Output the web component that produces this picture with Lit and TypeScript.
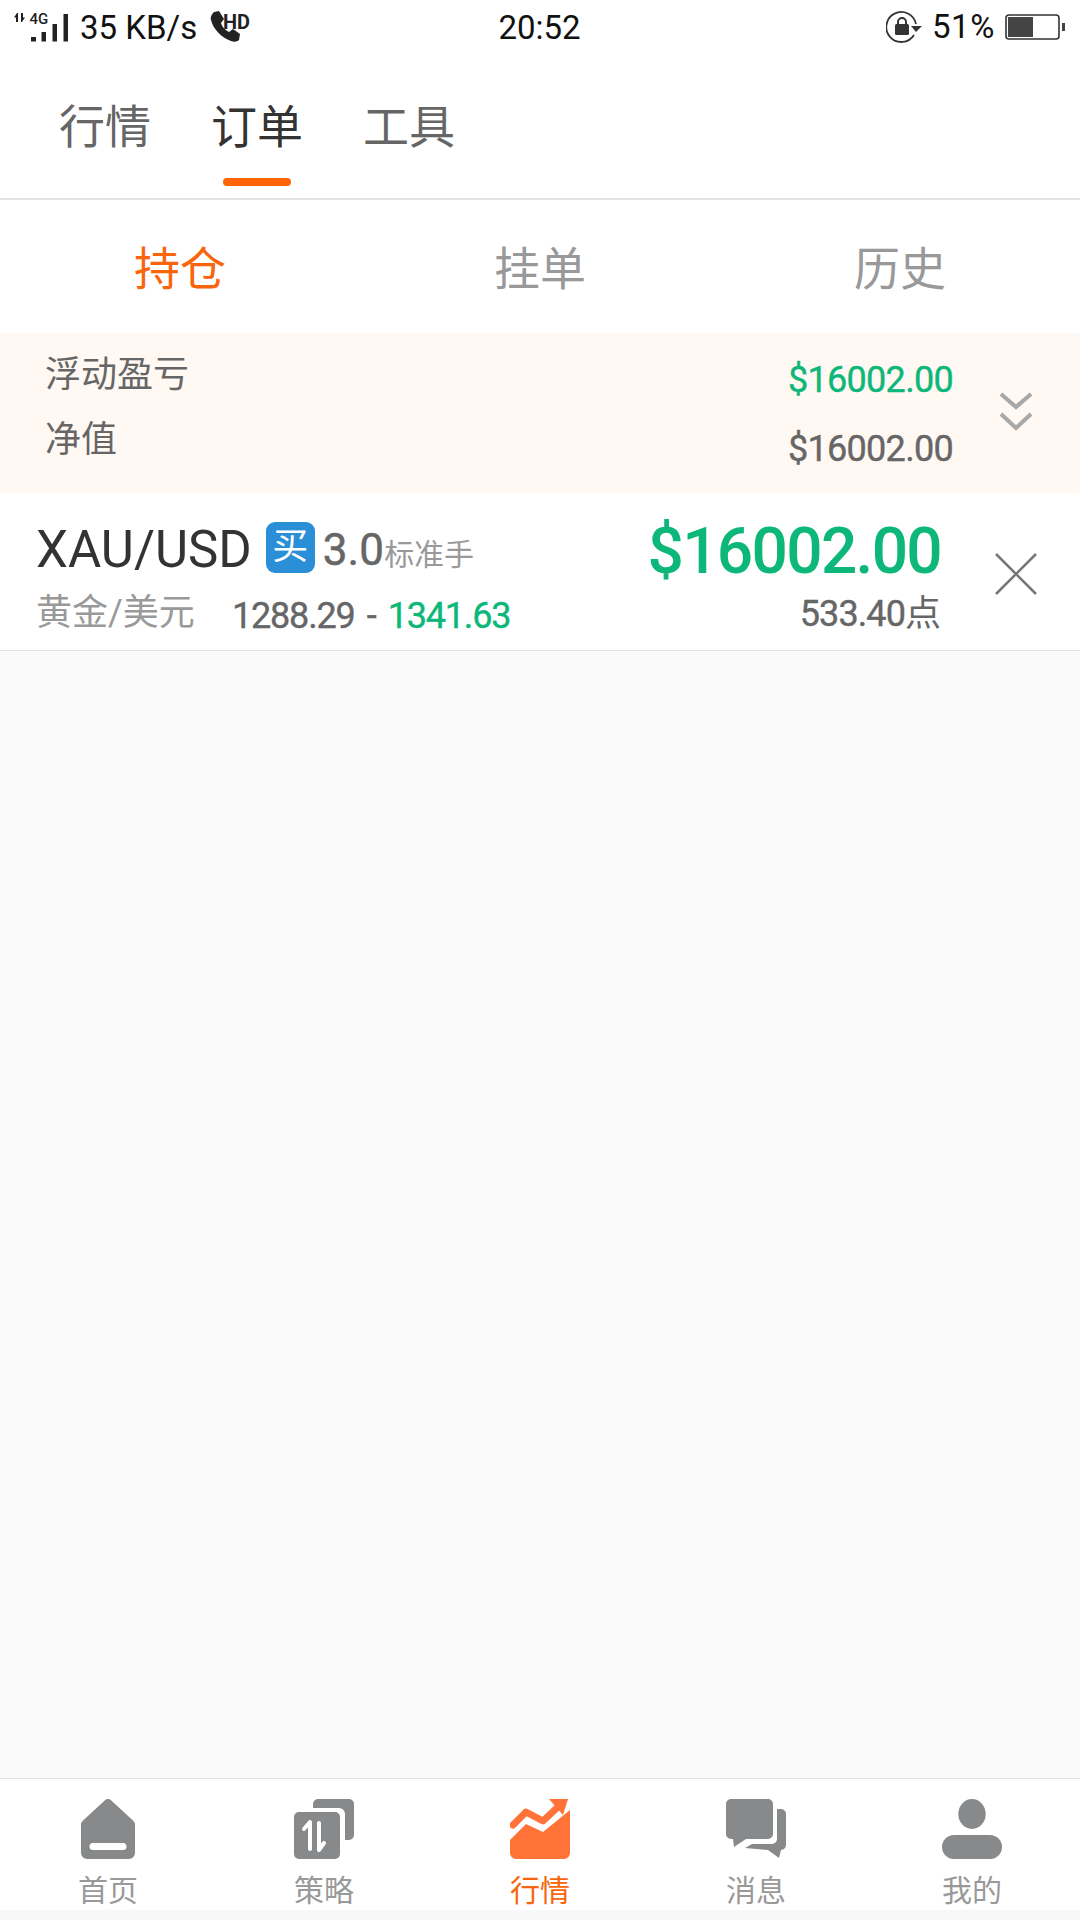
import { LitElement, html, css, svg } from "lit";
import { customElement } from "lit/decorators.js";

const NAV_GRAY = "#88898b";
const icons = {
  home: svg`<path fill="${NAV_GRAY}" fill-rule="evenodd" d="M27 1.2a4.4 4.4 0 0 1 6 0L55 21.5a6 6 0 0 1 2 4.500V54a6 6 0 0 1-6 6H9a6 6 0 0 1-6-6V26a6 6 0 0 1 2-4.500ZM15 44a3.500 3.500 0 0 0 0 7h30a3.500 3.500 0 0 0 0-7Z"/>`,
  strategy: svg`<path fill="${NAV_GRAY}" d="M19 5a5 5 0 0 1 5-5h31a5 5 0 0 1 5 5v31a5 5 0 0 1-5 5h-4V15a6 6 0 0 0-6-6H19Z"/>
    <rect fill="${NAV_GRAY}" x="0" y="13" width="46" height="47" rx="5"/>
    <path fill="none" stroke="#fff" stroke-width="4" stroke-linecap="round" stroke-linejoin="round" d="M10 30l6-7v27M30 44l-5 7V24"/>`,
  market: svg`<path fill="#ff7238" d="M0 41 16 25 33 33 60 11V54a6 6 0 0 1-6 6H6a6 6 0 0 1-6-6Z"/>
    <path fill="none" stroke="#ff7238" stroke-width="7" stroke-linecap="round" stroke-linejoin="round" d="M3 26 16 13 33 22 50 6"/>
    <path fill="#ff7238" d="M39 0H58L53 16Z"/>`,
  message: svg`<path fill="${NAV_GRAY}" d="M5 0H42a5 5 0 0 1 5 5V35a5 5 0 0 1-5 5H20L8 48 7 40H5a5 5 0 0 1-5-5V5a5 5 0 0 1 5-5Z"/>
    <path fill="${NAV_GRAY}" d="M51 10h4a5 5 0 0 1 5 5V46a5 5 0 0 1-5 5L53 59 42 51 19 49 26 45H46a5 5 0 0 0 5-5Z"/>`,
  mine: svg`<ellipse fill="${NAV_GRAY}" cx="30" cy="15" rx="13.700" ry="15"/><rect fill="${NAV_GRAY}" x="0" y="36" width="60" height="24" rx="12"/>`,
};

const navItems = [
  { icon: icons.home, label: "首页" },
  { icon: icons.strategy, label: "策略" },
  { icon: icons.market, label: "行情", active: true },
  { icon: icons.message, label: "消息" },
  { icon: icons.mine, label: "我的" },
];

@customElement("app-root")
export class AppRoot extends LitElement {
  static styles = css`
    :host {
      display: flex;
      flex-direction: column;
      width: 1080px;
      height: 1920px;
      background: #fff;
      font-family: Roboto, "Noto Sans CJK SC", sans-serif;
      overflow: hidden;
    }
    .status {
      height: 50px;
      display: grid;
      grid-template-columns: 1fr auto 1fr;
      align-items: center;
      color: #111;
      font-size: 33px;
      line-height: 38px;
      box-sizing: border-box;
      padding: 6px 15px 0 14px;
    }
    .st-left {
      display: flex;
      align-items: center;
    }
    .st-right {
      display: flex;
      align-items: center;
      justify-content: flex-end;
    }
    .speed {
      margin-left: 10px;
      margin-right: 13px;
    }
    .pct {
      margin: -3px 10px 0 10px;
      letter-spacing: 0.6px;
    }
    .sig,
    .call,
    .lock,
    .batt {
      display: block;
      flex: none;
      margin-top: -3px;
    }
    .sig text {
      font-family: Roboto, sans-serif;
      font-weight: 500;
    }
    .call text {
      font-family: Roboto, sans-serif;
      font-weight: 700;
    }
    .header {
      height: 148px;
      border-bottom: 2px solid #e2e2e2;
      display: flex;
      gap: 60px;
      padding-left: 59px;
    }
    .tab {
      display: flex;
      flex-direction: column;
      align-items: center;
      padding-top: 47px;
      font-size: 46px;
      line-height: 60px;
      color: #666;
    }
    .tab.on {
      color: #333;
    }
    .bar {
      width: 68px;
      height: 8px;
      margin-top: 21px;
      border-radius: 4px;
      background: #ff6406;
    }
    .subtabs {
      height: 133px;
      display: grid;
      grid-template-columns: repeat(3, 1fr);
      align-items: center;
      justify-items: center;
      font-size: 46px;
      line-height: 60px;
      color: #999;
    }
    .subtabs div {
      margin-top: 4px;
    }
    .subtabs .on {
      color: #f9650c;
    }
    .summary {
      height: 160px;
      background: #fff8f3;
      display: flex;
      align-items: flex-start;
      padding: 0 47px 0 45px;
    }
    .sum-labels {
      flex: 1;
      padding-top: 10px;
      font-size: 36px;
      line-height: 65px;
      color: #666;
    }
    .sum-values {
      padding-top: 13px;
      font-size: 36px;
      line-height: 69px;
      color: #666;
      letter-spacing: -0.7px;
      text-align: right;
      -webkit-text-stroke: 0.4px currentColor;
    }
    .green {
      color: #0db77a;
    }
    .chev {
      display: block;
      margin: 59px 0 0 46px;
    }
    .row {
      height: 157px;
      background: #fff;
      border-bottom: 1px solid #e2e2e2;
      display: flex;
      align-items: flex-start;
      padding: 0 43px 0 36px;
    }
    .row-main {
      flex: 1;
      padding-top: 27px;
    }
    .l1 {
      display: flex;
      align-items: center;
      height: 60px;
    }
    .sym {
      font-size: 51px;
      line-height: 60px;
      color: #333;
    }
    .badge {
      width: 49px;
      height: 51px;
      margin: -6px 8px 0 14px;
      border-radius: 9px;
      background: #2a8fd6;
      color: #fff;
      font-size: 36px;
      line-height: 50px;
      text-align: center;
    }
    .lots {
      font-size: 44px;
      color: #666;
      -webkit-text-stroke: 0.5px currentColor;
      letter-spacing: 0.1px;
    }
    .lots span {
      font-size: 30px;
      color: #999;
      -webkit-text-stroke: 0;
      letter-spacing: 0;
    }
    .l2 {
      display: flex;
      align-items: center;
      height: 65px;
      margin-top: 3px;
    }
    .name {
      font-size: 36px;
      line-height: 44px;
      color: #999;
      width: 196px;
      margin-top: -5px;
    }
    .range {
      font-size: 36px;
      line-height: 44px;
      color: #666;
      letter-spacing: -1.2px;
      word-spacing: 4.5px;
      -webkit-text-stroke: 0.4px currentColor;
    }
    .row-right {
      padding-top: 27px;
      text-align: right;
    }
    .pnl {
      font-size: 64px;
      font-weight: 500;
      line-height: 64px;
      letter-spacing: -1.7px;
      color: #0db77a;
    }
    .pts {
      font-size: 36px;
      line-height: 60px;
      letter-spacing: -0.9px;
      color: #666;
      -webkit-text-stroke: 0.4px currentColor;
    }
    .pts span {
      -webkit-text-stroke: 0;
      letter-spacing: 0;
    }
    .close {
      display: block;
      margin: 60px 0 0 54px;
    }
    .empty {
      flex: 1;
      background: #fafafa;
    }
    .nav {
      height: 131px;
      border-top: 1px solid #e2e2e2;
      background: #fff;
      display: grid;
      grid-template-columns: repeat(5, 216px);
    }
    .nav-item {
      display: flex;
      flex-direction: column;
      align-items: center;
      padding-top: 20px;
      font-size: 30px;
      line-height: 36px;
      color: #999;
    }
    .nav-item svg {
      display: block;
      margin-bottom: 14px;
    }
    .nav-item.on {
      color: #f9650c;
    }
    .strip {
      height: 10px;
      background: #f8f8f8;
    }
  `;

  render() {
    return html`
      <div class="status">
        <div class="st-left">
          <svg class="sig" width="56" height="42" viewBox="0 0 56 42">
            <path fill="#222" d="M3 7 0 11.500H2V16H4V7ZM8 16 11 11.500H9V7H7V16Z" />
            <text x="15.500" y="17.500" font-size="15" fill="#222">4G</text>
            <path fill="#222" d="M17 31h5v4.500h-5zM27.500 26h4.500v9.500h-4.500zM38.500 18h4.500v17.500h-4.500zM49.500 8h4.500v27.500h-4.500z" />
          </svg>
          <span class="speed">35 KB/s</span>
          <svg class="call" width="42" height="32" viewBox="0 0 42 32">
            <path fill="#222" d="M4 1 9 0l5 8-3 4c1 4 4 7 8 9l4-3 7 5-1 6c-2 2-5 2-8 1C12 27 3 18 1 9 0 6 2 3 4 1Z" />
            <text x="13" y="18" font-size="20" fill="#222" textLength="27" lengthAdjust="spacingAndGlyphs">HD</text>
          </svg>
        </div>
        <div>20:52</div>
        <div class="st-right">
          <svg class="lock" width="36" height="32" viewBox="0 0 36 32">
            <path fill="none" stroke="#333" stroke-width="1.800" d="M28 24A15 15 0 1 1 30 13" />
            <path fill="#333" d="M25 15H36L30 21Z" />
            <path fill="none" stroke="#333" stroke-width="2" d="M12 13V11a4 4 0 0 1 8 0v2" />
            <rect fill="#333" x="9" y="13" width="14" height="11" rx="1.500" />
          </svg>
          <span class="pct">51%</span>
          <svg class="batt" width="60" height="26" viewBox="0 0 60 26">
            <rect x="1" y="1" width="53" height="24" rx="3" fill="none" stroke="#333" stroke-width="1.600" />
            <rect x="3" y="3" width="25" height="20" fill="#444" />
            <rect x="57" y="9" width="3" height="8" fill="#444" />
          </svg>
        </div>
      </div>

      <div class="header">
        <div class="tab">行情</div>
        <div class="tab on">订单<div class="bar"></div></div>
        <div class="tab">工具</div>
      </div>

      <div class="subtabs">
        <div class="on">持仓</div>
        <div>挂单</div>
        <div>历史</div>
      </div>

      <div class="summary">
        <div class="sum-labels">
          <div>浮动盈亏</div>
          <div>净值</div>
        </div>
        <div class="sum-values">
          <div class="green">$16002.00</div>
          <div>$16002.00</div>
        </div>
        <svg class="chev" width="34" height="40" viewBox="0 0 34 40">
          <path fill="none" stroke="#a8a8a8" stroke-width="4" d="M2 2 17 15 32 2M2 22 17 36 32 22" />
        </svg>
      </div>

      <div class="row">
        <div class="row-main">
          <div class="l1">
            <span class="sym">XAU/USD</span>
            <span class="badge">买</span>
            <span class="lots">3.0<span>标准手</span></span>
          </div>
          <div class="l2">
            <span class="name">黄金/美元</span>
            <span class="range">1288.29 - <span class="green">1341.63</span></span>
          </div>
        </div>
        <div class="row-right">
          <div class="pnl">$16002.00</div>
          <div class="pts">533.40<span>点</span></div>
        </div>
        <svg class="close" width="42" height="42" viewBox="0 0 42 42">
          <path fill="none" stroke="#777" stroke-width="2.600" d="M1 1 41 41M41 1 1 41" />
        </svg>
      </div>

      <div class="empty"></div>

      <div class="nav">
        ${navItems.map(
          (n) => html`<div class="nav-item ${n.active ? "on" : ""}">
            <svg width="60" height="60" viewBox="0 0 60 60">${n.icon}</svg>
            <span>${n.label}</span>
          </div>`
        )}
      </div>
      <div class="strip"></div>
    `;
  }
}
